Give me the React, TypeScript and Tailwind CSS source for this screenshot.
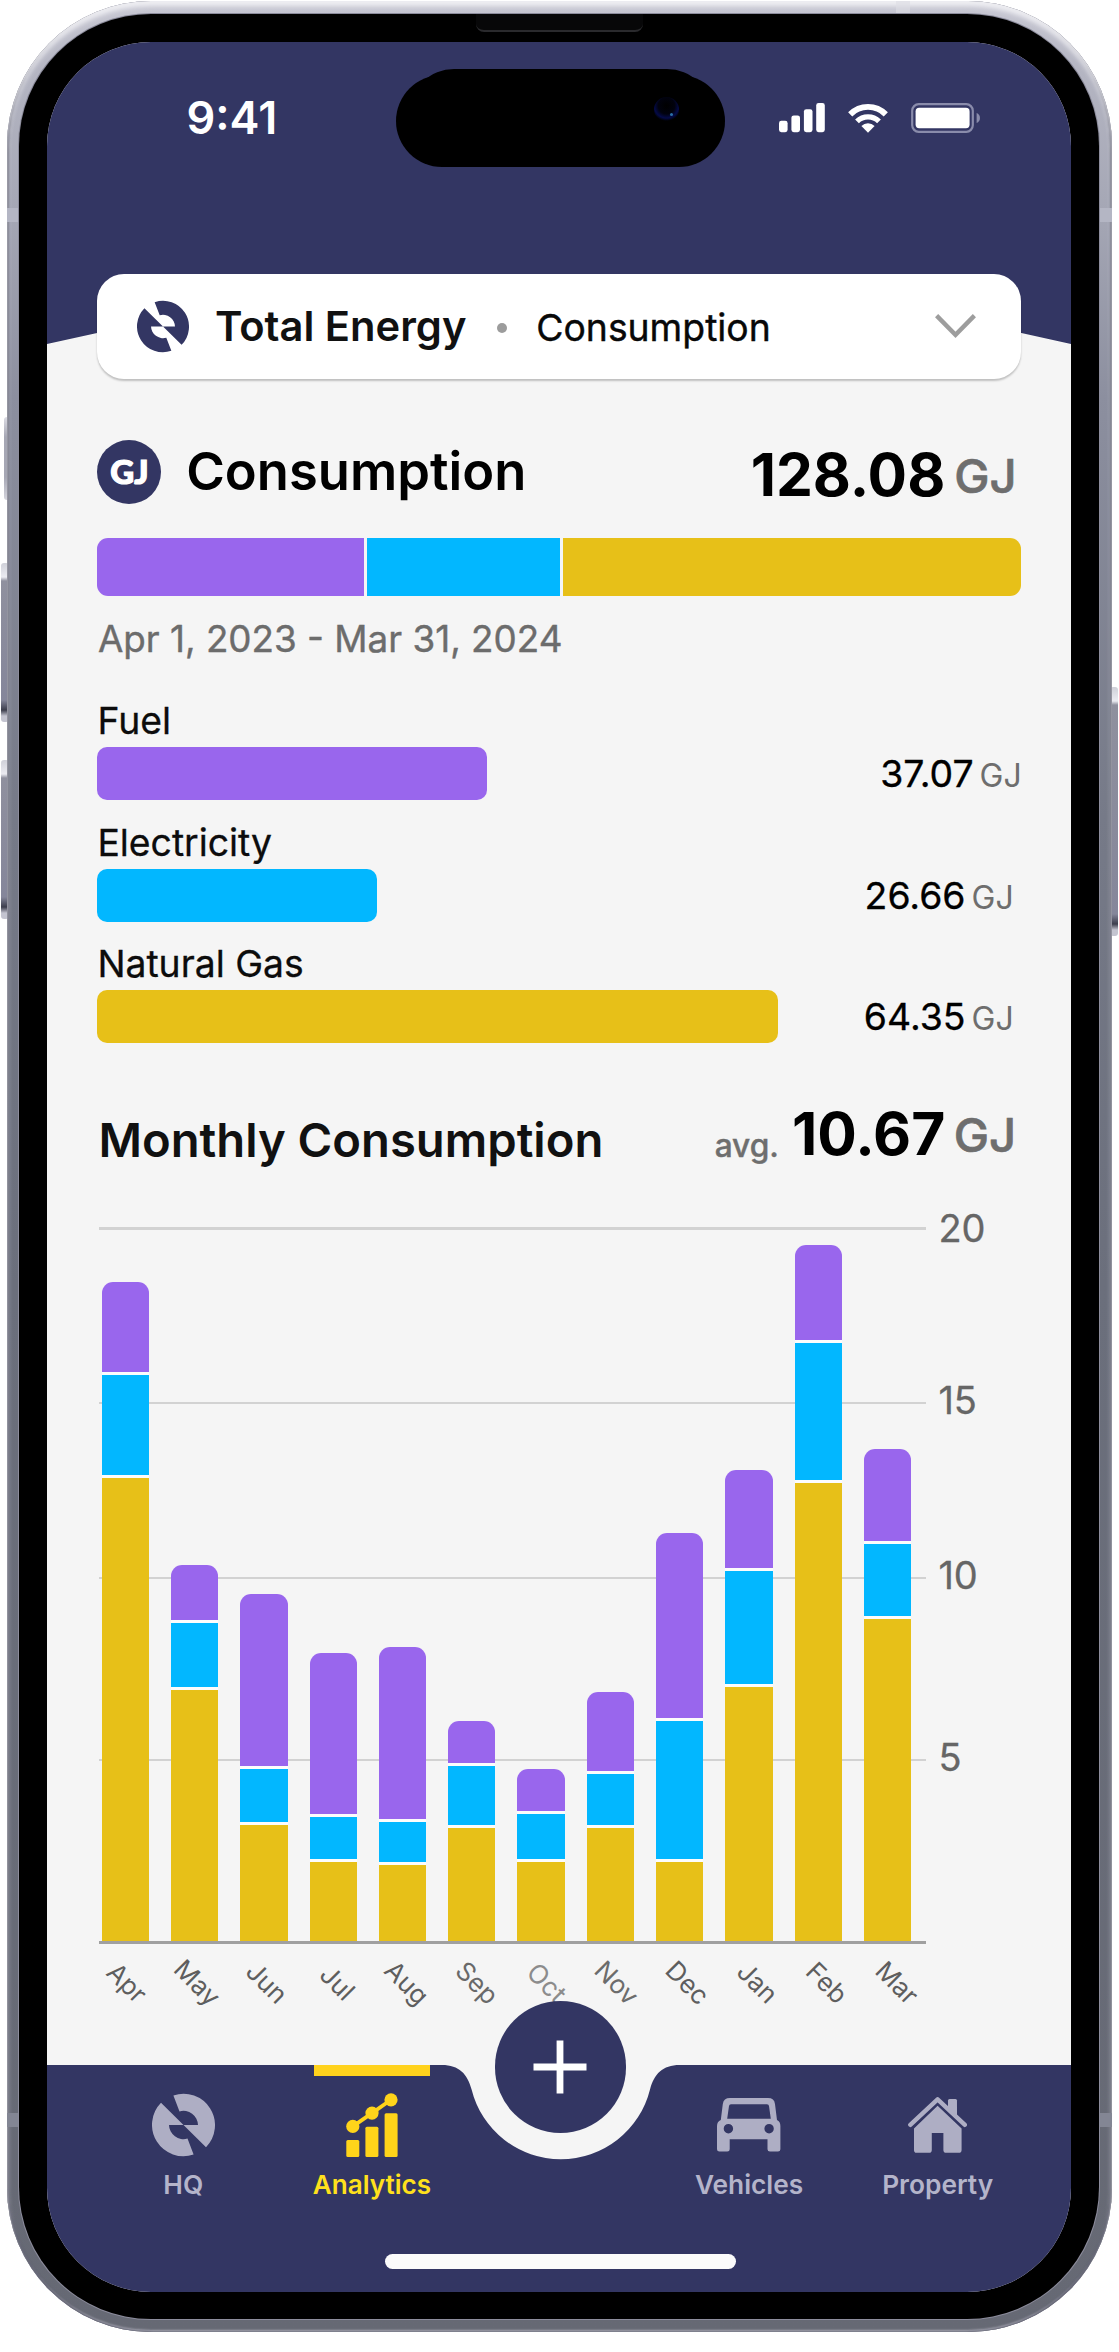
import type { ReactNode } from 'react';

const PURPLE = 'bg-[#9966ed]';
const BLUE = 'bg-[#02b7ff]';
const GOLD = 'bg-[#e7c018]';

type Source = { name: string; value: string; width: number; color: string; inset: string };

const sources: Source[] = [
  { name: 'Fuel', value: '37.07', width: 389.5, color: PURPLE, inset: '-mr-[1px]' },
  { name: 'Electricity', value: '26.66', width: 280, color: BLUE, inset: 'mr-[7px]' },
  { name: 'Natural Gas', value: '64.35', width: 680.5, color: GOLD, inset: 'mr-[7px]' },
];

/* Segment heights in pixels: fuel, electricity, natural gas */
type Month = { name: string; fuel: number; power: number; gas: number; tone: string };

const months: Month[] = [
  { name: 'Apr', fuel: 89.7, power: 100.3, gas: 463, tone: 'text-[#5e5e5e]' },
  { name: 'May', fuel: 55.3, power: 64, gas: 251.3, tone: 'text-[#5e5e5e]' },
  { name: 'Jun', fuel: 172, power: 52.7, gas: 116.3, tone: 'text-[#5e5e5e]' },
  { name: 'Jul', fuel: 161, power: 42.3, gas: 79.3, tone: 'text-[#5e5e5e]' },
  { name: 'Aug', fuel: 172, power: 40, gas: 76.7, tone: 'text-[#5e5e5e]' },
  { name: 'Sep', fuel: 42.3, power: 58.3, gas: 113.7, tone: 'text-[#696969]' },
  { name: 'Oct', fuel: 42.3, power: 44.7, gas: 79.3, tone: 'text-[#8c8c8c]' },
  { name: 'Nov', fuel: 79.3, power: 50.3, gas: 113.7, tone: 'text-[#6c6c6c]' },
  { name: 'Dec', fuel: 185, power: 137.7, gas: 79.3, tone: 'text-[#5e5e5e]' },
  { name: 'Jan', fuel: 98, power: 113.3, gas: 254, tone: 'text-[#5e5e5e]' },
  { name: 'Feb', fuel: 95.3, power: 137, gas: 458, tone: 'text-[#5e5e5e]' },
  { name: 'Mar', fuel: 92.7, power: 71.3, gas: 322.7, tone: 'text-[#5e5e5e]' },
];

const gridLines = [
  { label: '20', top: 0, shift: '-translate-y-[0.5px]' },
  { label: '15', top: 174.7, shift: '-translate-y-[3px]' },
  { label: '10', top: 349.4, shift: '-translate-y-[3px]' },
  { label: '5', top: 531.7, shift: '-translate-y-[3px]' },
];

function Logo({ className }: { className: string }) {
  const half = 'M21.4 2.3A31.4 31.4 0 0 1 54 54L31.5 31.8H46A14.5 14.5 0 0 0 27.5 18.2Z';
  return (
    <svg viewBox="0 0 63 63.6" className={className} fill="currentColor">
      <path d={half} />
      <path d={half} transform="rotate(180 31.5 31.8)" />
    </svg>
  );
}

function AnalyticsIcon() {
  return (
    <svg viewBox="0 0 52 64" className="h-16 w-[52px]" fill="currentColor">
      <rect x="0.3" y="47" width="13" height="17" rx="1.5" />
      <rect x="19.4" y="33.7" width="13" height="30.3" rx="1.5" />
      <rect x="38.6" y="20.3" width="13" height="43.7" rx="1.5" />
      <path d="M6.8 33.4 26 20.1 45 6.8" fill="none" stroke="currentColor" strokeWidth="3.8" />
      <circle cx="6.8" cy="33.4" r="6.6" />
      <circle cx="26" cy="20.1" r="6.6" />
      <circle cx="45" cy="6.8" r="6.6" />
    </svg>
  );
}

function CarIcon() {
  return (
    <svg viewBox="0 0 63.4 53.6" className="h-[53.6px] w-[63.4px]" fill="currentColor">
      <path
        fillRule="evenodd"
        d="M13 0H51Q57.3 0 58 6L60 22Q63.4 23.5 63.4 28V51.3Q63.4 53.6 61 53.6H53Q50.5 53.6 50.5 51.3V41.3H12.7V51.3Q12.7 53.6 10.3 53.6H2.4Q0 53.6 0 51.3V28Q0 23.5 3.8 22L5.8 6Q6.6 0 13 0ZM14 6.2Q12.2 6.2 12 8L10.2 20.7H53.8L52 8Q51.8 6.2 50 6.2ZM11.4 26A4.7 4.7 0 1 0 11.4 35.4 4.7 4.7 0 1 0 11.4 26ZM52.1 26A4.7 4.7 0 1 0 52.1 35.4 4.7 4.7 0 1 0 52.1 26Z"
      />
    </svg>
  );
}

function HouseIcon() {
  return (
    <svg viewBox="0 0 59.2 56" className="h-14 w-[59.2px]" fill="currentColor">
      <path d="M2.3 27.8 29.6 2.3 56.9 27.8" fill="none" stroke="currentColor" strokeWidth="4.4" strokeLinecap="round" strokeLinejoin="round" />
      <path d="M40 10V3.5Q40 2 41.5 2H47.5Q49 2 49 3.5V19Z" />
      <path d="M29.6 8.7 53.6 31.4V53Q53.6 55.8 51 55.8H38Q35.4 55.8 35.4 53V36H23.8V53Q23.8 55.8 21.2 55.8H8.4Q6 55.8 6 53V31.4Z" />
    </svg>
  );
}

function StatusIcons() {
  return (
    <div className="flex items-center">
      <svg viewBox="0 0 46 30" className="h-[30px] w-[46px]" fill="#fff">
        <rect x="0" y="17.8" width="8.6" height="11.4" rx="2.4" />
        <rect x="12.4" y="12.4" width="8.6" height="16.8" rx="2.4" />
        <rect x="24.9" y="6.2" width="8.6" height="23" rx="2.4" />
        <rect x="37.2" y="0" width="8.6" height="29.2" rx="2.4" />
      </svg>
      <svg viewBox="0 0 40 30" className="ml-[22.5px] h-[30px] w-10" fill="none" stroke="#fff">
        <path d="M2.2 11.4A25 25 0 0 1 37.8 11.4" strokeWidth="5.8" />
        <path d="M9 18.4A15.6 15.6 0 0 1 31 18.4" strokeWidth="5.4" />
        <path d="M13.4 23A9.5 9.5 0 0 1 26.6 23L20 29.8Z" fill="#fff" stroke="none" />
      </svg>
      <svg viewBox="0 0 70 30" className="ml-[23.5px] h-[30px] w-[70px]">
        <rect x="1.2" y="1.2" width="60.6" height="27.6" rx="6.5" fill="none" stroke="#8a8cab" strokeWidth="2.2" />
        <rect x="4.6" y="4.8" width="54" height="20.4" rx="3.6" fill="#fff" />
        <path d="M65.6 10A5.4 5.4 0 0 1 65.6 20Z" fill="#8a8cab" />
      </svg>
    </div>
  );
}

function Island() {
  return (
    <div className="relative h-[98.5px] w-[329.5px]">
      <div className="absolute inset-x-0 bottom-0 h-[92.5px] rounded-full bg-black" />
      <div className="absolute inset-x-[14px] top-0 h-[88px] rounded-full bg-black" />
      <div className="absolute left-[258px] top-[28px] size-[25px] rounded-full bg-[radial-gradient(circle_at_50%_35%,#000_0%,#01020e_40%,#040a48_60%,#000_74%)]" />
      <div className="absolute left-[274px] top-[44px] size-[3px] rounded-full bg-[#2a6ea8]" />
    </div>
  );
}

function Header() {
  return (
    <>
      <div className="absolute inset-x-0 top-0 h-[302px] bg-[#333663] [clip-path:polygon(0_0,100%_0,100%_100%,95%_290.7px,5%_290.7px,0_100%)]" />
      <div className="relative flex h-[231.5px] items-start">
        <div className="flex h-[152px] w-full items-center">
          <span className="w-[349px] pb-[2px] pl-[139.5px] text-[45px] leading-none font-semibold text-white">9:41</span>
          <Island />
          <div className="pb-[1px] pl-[53.7px]">
            <StatusIcons />
          </div>
        </div>
      </div>
    </>
  );
}

function Selector() {
  return (
    <div className="relative flex h-[105.5px] items-center rounded-[27px] bg-white pr-[45px] pl-[39.5px] shadow-[0_2px_2px_rgba(0,0,0,0.22)]">
      <Logo className="h-[53px] w-[52px] text-[#333663]" />
      <span className="mt-[2px] ml-[26px] text-[41.7px] leading-none font-semibold text-[#111]">Total Energy</span>
      <span className="mt-[3px] ml-[30.5px] size-[10px] rounded-full bg-[#9c9c9c]" />
      <span className="mt-[3px] ml-[29.3px] text-[37.3px] leading-none text-[#080808] [-webkit-text-stroke:0.4px_#080808]">Consumption</span>
      <svg viewBox="0 0 41 24" className="ml-auto h-6 w-[41px]" fill="none" stroke="#9d9d9d" strokeWidth="4.4">
        <path d="M1.6 1.6 20.5 20.8 39.4 1.6" />
      </svg>
    </div>
  );
}

function Unit({ children, className }: { children: ReactNode; className: string }) {
  return <span className={`leading-none text-[#6e6e6e] ${className}`}>{children}</span>;
}

function Totals() {
  return (
    <section className="mt-[60.5px]">
      <div className="flex h-16 items-center">
        <span className="flex size-16 items-center justify-center rounded-full bg-[#333663] font-['Lato','Inter',sans-serif] text-[33px] leading-none font-black text-white [-webkit-text-stroke:1.2px_#fff]">GJ</span>
        <h1 className="ml-[24.8px] text-[52.5px] leading-none font-semibold text-black">Consumption</h1>
        <div className="ml-auto flex items-center pt-[7px] pr-[4px]">
          <span className="text-[58.6px] leading-none font-bold text-black">128.08</span>
          <Unit className="mt-[2px] ml-[9px] text-[47.2px] font-medium [-webkit-text-stroke:0.7px_#6e6e6e]">GJ</Unit>
        </div>
      </div>
      <div className="mt-[34px] flex h-[58.7px] gap-[3px] overflow-hidden rounded-[11px]">
        <div className={`w-[266.5px] ${PURPLE}`} />
        <div className={`w-[193.5px] ${BLUE}`} />
        <div className={`grow ${GOLD}`} />
      </div>
      <p className="mt-[24px] pl-[0.5px] text-[36.8px] leading-[37px] text-[#6c6c6c] [-webkit-text-stroke:0.4px_#6c6c6c]">Apr 1, 2023 - Mar 31, 2024</p>
    </section>
  );
}

function SourceRow({ source }: { source: Source }) {
  return (
    <div className="h-[121.6px]">
      <p className="h-[46px] pt-[1px] text-[37.3px] leading-[38px] text-[#0c0c0c] [-webkit-text-stroke:0.3px_#0c0c0c]">{source.name}</p>
      <div className="flex h-[53px] items-center justify-between">
        <div className={`h-full rounded-[10px] ${source.color}`} style={{ width: source.width }} />
        <div className={`flex items-baseline gap-[6px] ${source.inset}`}>
          <span className="text-[37.4px] leading-none text-black [-webkit-text-stroke:0.3px_#000]">{source.value}</span>
          <Unit className="text-[32px]">GJ</Unit>
        </div>
      </div>
    </div>
  );
}

function MonthlyHeader() {
  return (
    <div className="mt-[41px] flex h-[60px] items-baseline pr-[4.5px] pl-[1px]">
      <h2 className="text-[47.2px] leading-[60px] font-semibold text-[#111]">Monthly Consumption</h2>
      <div className="ml-auto flex items-baseline">
        <Unit className="text-[31.7px] font-medium [-webkit-text-stroke:0.4px_#6e6e6e]">avg.</Unit>
        <span className="ml-[13px] -translate-y-[2px] text-[58.7px] leading-none font-bold text-black">10.67</span>
        <Unit className="ml-[8.5px] -translate-y-[5.5px] text-[47.2px] font-medium [-webkit-text-stroke:0.7px_#6e6e6e]">GJ</Unit>
      </div>
    </div>
  );
}

function Chart() {
  return (
    <div className="mt-[61.5px] ml-[1.5px] w-[827px]">
      <div className="relative h-[715px]">
        {gridLines.map((line) => (
          <div key={line.label} className="absolute inset-x-0 flex h-0 items-center" style={{ top: line.top }}>
            <div className="h-[2.5px] w-full shrink-0 bg-[#d2d2d2]" />
            <span className={`pl-[12.5px] text-[38px] leading-none text-[#666] [-webkit-text-stroke:0.3px_#666] ${line.shift}`}>{line.label}</span>
          </div>
        ))}
        <div className="relative flex h-[713px] items-end justify-between pr-[14.6px] pl-[2.8px]">
          {months.map((m) => (
            <div key={m.name} className="flex w-[47.3px] flex-col gap-[3px] overflow-hidden rounded-t-[11px] bg-[#fcfcfc]">
              <div className={PURPLE} style={{ height: m.fuel }} />
              <div className={BLUE} style={{ height: m.power }} />
              <div className={GOLD} style={{ height: m.gas }} />
            </div>
          ))}
        </div>
        <div className="relative h-[3px] bg-[#a0a0a0]" />
      </div>
      <div className="flex justify-between pr-[5px] pl-[4px]">
        {months.map((m) => (
          <div key={m.name} className="flex h-[80px] w-[47.6px] items-center justify-center">
            <span className={`rotate-45 text-[26px] leading-none ${m.tone}`}>{m.name}</span>
          </div>
        ))}
      </div>
    </div>
  );
}

function NavItem({ icon, label, active }: { icon: ReactNode; label: string; active?: boolean }) {
  return (
    <div className={`flex flex-col items-center ${active ? 'text-[#ffd41a]' : 'text-[#aeaec4]'}`}>
      <div className={`h-[11px] w-[116px] ${active ? 'bg-[#ffd21c]' : ''}`} />
      <div className="mt-[17.5px] flex h-16 items-center">{icon}</div>
      <span className={`mt-[14px] leading-[27px] font-semibold ${active ? 'text-[26.1px] text-[#ffe11c]' : 'text-[26.3px] text-[#b4b4ca]'}`}>{label}</span>
    </div>
  );
}

function TabBar() {
  return (
    <nav className="absolute inset-x-0 bottom-0 h-[227.5px]">
      <svg viewBox="0 0 1024.5 227.5" className="absolute inset-0 size-full" fill="#333663">
        <path d="M0 0H395C412 0 420.5 9 424.6 24.5A91.9 91.9 0 0 0 603 24.5C607.1 9 615.6 0 632.6 0H1024.5V227.5H0Z" />
      </svg>
      <div className="relative grid grid-cols-[repeat(5,188.6px)] justify-center pl-[2.5px]">
        <NavItem icon={<Logo className="h-16 w-[63px]" />} label="HQ" />
        <NavItem icon={<AnalyticsIcon />} label="Analytics" active />
        <div className="flex justify-center">
          <button className="-mt-[64px] flex h-[132.6px] w-[131px] items-center justify-center rounded-full bg-[#333663]">
            <svg viewBox="0 0 54 54" className="size-[54px]" stroke="#fff" strokeWidth="6.8">
              <path d="M0.5 27H53.5M27 0.5V53.5" />
            </svg>
          </button>
        </div>
        <NavItem icon={<CarIcon />} label="Vehicles" />
        <NavItem icon={<HouseIcon />} label="Property" />
      </div>
      <div className="absolute bottom-[23.5px] left-[338px] h-[14.5px] w-[351px] rounded-full bg-[#fbfbfb]" />
    </nav>
  );
}

function SideButton({ className }: { className: string }) {
  return <div className={`absolute rounded-[3px] bg-[linear-gradient(180deg,#cfd0d8_0px,#ebebf1_14px,#8f909e_18px,#85869a_calc(100%-22px),#3c3d4c_calc(100%-12px),#c4c4d0_calc(100%-6px))] ${className}`} />;
}

export default function App() {
  return (
    <div className="relative h-[2352px] w-[1119px] overflow-hidden bg-white pt-[1px] pl-[6.5px] font-['Inter','Liberation_Sans',sans-serif]">
      <div className="absolute top-[417px] left-[3.5px] h-[83px] w-[6px] rounded-[3px] bg-[linear-gradient(180deg,#dcdce4,#a6a7b4_20px,#a6a7b4_60px,#d4d4dc)]" />
      <SideButton className="top-[563px] left-[1px] h-[159px] w-[8px]" />
      <SideButton className="top-[760px] left-[1px] h-[159px] w-[8px]" />
      <SideButton className="top-[687px] left-[1110px] h-[249px] w-[8px]" />

      <div className="relative h-[2331px] w-[1105.5px] overflow-hidden rounded-[144px] bg-[linear-gradient(180deg,#c9c9d4_0%,#b4b5c2_3%,#a5a7b5_9%,#8c8f9f_17%,#767a88_35%,#6b6f7c_55%,#666974_100%)] pt-[13px] pl-[12.3px] shadow-[inset_0_5px_5px_#f0f0f4,inset_2px_0_2px_rgba(60,62,80,0.75),inset_-2px_0_2px_rgba(60,62,80,0.75),inset_0_-2px_2px_#aaaab6]">
        <div className="absolute top-[207px] left-0 h-[14px] w-full bg-[#b4b6c4]" />
        <div className="absolute top-[2112px] left-0 h-[14px] w-full bg-[#838694]" />
        <div className="absolute top-0 left-[889px] h-[14px] w-[14px] bg-[#dedee5]/60" />
        <div className="relative h-[2305px] w-[1080.7px] rounded-[132px] bg-black pt-[28px] pl-[28.2px] shadow-[0_0_0_1px_#8c8c9c]">
          <div className="absolute top-0 left-[457px] h-[18px] w-[167px] rounded-b-[8px] border-b-2 border-[#2a2a2d] bg-[#070708]" />
          <div className="relative h-[2250px] w-[1024.5px] overflow-hidden rounded-[104px] bg-[#f5f5f5]">
            <Header />
            <main className="pr-[50.8px] pl-[50.4px]">
              <Selector />
              <Totals />
              <div className="mt-[44px]">
                {sources.map((s) => (
                  <SourceRow key={s.name} source={s} />
                ))}
              </div>
              <MonthlyHeader />
              <Chart />
            </main>
            <TabBar />
          </div>
        </div>
      </div>
    </div>
  );
}
